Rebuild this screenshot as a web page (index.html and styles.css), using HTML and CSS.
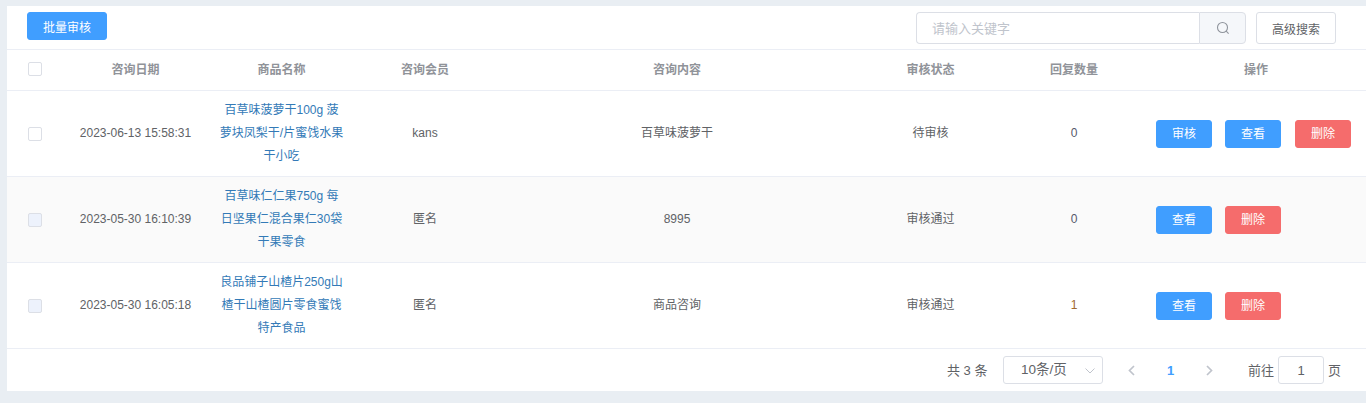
FILE: index.html
```html
<!DOCTYPE html>
<html lang="zh">
<head>
<meta charset="utf-8">
<title>咨询管理</title>
<link rel="stylesheet" href="styles.css">
</head>
<body>
<main class="panel">
  <div class="toolbar">
    <button class="btn btn-primary btn-batch">批量审核</button>
    <div class="search">
      <div class="search-group">
        <input class="search-input" placeholder="请输入关键字">
        <span class="search-btn">
          <svg width="14" height="14" viewBox="0 0 14 14" fill="none" stroke="#8f949c" stroke-width="1.1"><circle cx="6.500" cy="6.500" r="5"/><path d="M10.200 10.200 12.600 12.600"/></svg>
        </span>
      </div>
      <button class="btn btn-plain">高级搜索</button>
    </div>
  </div>
  <table class="grid">
    <colgroup>
      <col class="c-check"><col class="c-date"><col class="c-name"><col class="c-member"><col class="c-content"><col class="c-status"><col class="c-count"><col>
    </colgroup>
    <thead>
      <tr>
        <th><span class="check"></span></th>
        <th>咨询日期</th><th>商品名称</th><th>咨询会员</th><th>咨询内容</th><th>审核状态</th><th>回复数量</th><th>操作</th>
      </tr>
    </thead>
    <tbody>
      <tr>
        <td><span class="check"></span></td>
        <td>2023-06-13 15:58:31</td>
        <td><a class="link">百草味菠萝干100g 菠萝块凤梨干/片蜜饯水果干小吃</a></td>
        <td>kans</td><td>百草味菠萝干</td><td>待审核</td><td><span class="num">0</span></td>
        <td class="ops"><button class="btn btn-primary btn-op">审核</button><button class="btn btn-primary btn-op">查看</button><button class="btn btn-danger btn-op">删除</button></td>
      </tr>
      <tr class="striped">
        <td><span class="check check-off"></span></td>
        <td>2023-05-30 16:10:39</td>
        <td><a class="link">百草味仁仁果750g 每日坚果仁混合果仁30袋干果零食</a></td>
        <td>匿名</td><td>8995</td><td>审核通过</td><td><span class="num">0</span></td>
        <td class="ops"><button class="btn btn-primary btn-op">查看</button><button class="btn btn-danger btn-op">删除</button></td>
      </tr>
      <tr>
        <td><span class="check check-off"></span></td>
        <td>2023-05-30 16:05:18</td>
        <td><a class="link">良品铺子山楂片250g山楂干山楂圆片零食蜜饯特产食品</a></td>
        <td>匿名</td><td>商品咨询</td><td>审核通过</td><td><span class="num num-on">1</span></td>
        <td class="ops"><button class="btn btn-primary btn-op">查看</button><button class="btn btn-danger btn-op">删除</button></td>
      </tr>
    </tbody>
  </table>
  <div class="pager">
    <span class="total">共 3 条</span>
    <span class="size">10条/页
      <svg class="size-arrow" width="10" height="6" viewBox="0 0 10 6" fill="none" stroke="#c0c4cc" stroke-width="1"><path d="M.5.5 5 5 9.500.5"/></svg>
    </span>
    <svg class="prev" width="7" height="11" viewBox="0 0 7 11" fill="none" stroke="#c0c4cc" stroke-width="1.700"><path d="M6 1 1.500 5.500 6 10"/></svg>
    <span class="page">1</span>
    <svg class="next" width="7" height="11" viewBox="0 0 7 11" fill="none" stroke="#c0c4cc" stroke-width="1.700"><path d="M1 1 5.500 5.500 1 10"/></svg>
    <span class="goto">前往</span>
    <span class="goto-input">1</span>
    <span class="goto-unit">页</span>
  </div>
</main>
</body>
</html>
```

FILE: styles.css
```css
* { box-sizing: border-box; }
html, body { margin: 0; height: 403px; overflow: hidden; }
body {
  background: #e9eef3;
  padding: 6px 0 12px 7px;
  font-family: "Liberation Sans", "Noto Sans CJK SC", sans-serif;
  font-size: 12px;
  color: #606266;
}
.panel { background: #fff; height: 385px; }

.toolbar {
  height: 44px;
  display: flex;
  justify-content: space-between;
  align-items: flex-start;
  padding: 6px 30px 0 20px;
  border-bottom: 1px solid #ebeef5;
}
.btn {
  font: inherit;
  border-radius: 3px;
  border: 1px solid transparent;
  padding: 0;
  text-align: center;
  cursor: pointer;
}
.btn-primary { background: #409eff; border-color: #409eff; color: #fff; }
.btn-danger { background: #f56c6c; border-color: #f56c6c; color: #fff; }
.btn-plain { background: #fff; border-color: #dcdfe6; color: #606266; width: 80px; height: 32px; }
.btn-batch { width: 80px; height: 28px; }
.btn-op { width: 56px; height: 28px; padding-top: 2px; margin-right: 13px; }
.btn-op + .btn-op + .btn-op { margin-left: 1px; }
.btn-op:last-child { margin-right: 0; }

.search { display: flex; gap: 10px; }
.search-group { display: flex; width: 330px; height: 32px; }
.search-input {
  flex: 1;
  min-width: 0;
  height: 32px;
  border: 1px solid #dcdfe6;
  border-right: 0;
  border-radius: 4px 0 0 4px;
  padding: 0 15px;
  font: 13px "Liberation Sans", "Noto Sans CJK SC", sans-serif;
  outline: none;
}
.search-input::placeholder { color: #c0c4cc; }
.search-btn {
  width: 47px;
  background: #f5f7fa;
  border: 1px solid #dcdfe6;
  border-radius: 0 4px 4px 0;
  display: flex;
  align-items: center;
  justify-content: center;
}

.grid { width: 100%; table-layout: fixed; border-collapse: separate; border-spacing: 0; }
.c-check { width: 56px; }
.c-date { width: 145px; }
.c-name { width: 147px; }
.c-member { width: 140px; }
.c-content { width: 364px; }
.c-status { width: 143px; }
.c-count { width: 144px; }
.grid th, .grid td {
  padding: 0;
  text-align: center;
  vertical-align: middle;
  border-bottom: 1px solid #ebeef5;
}
.grid th { height: 41px; padding-bottom: 3px; color: #909399; font-weight: 700; }
.grid td { height: 86px; line-height: 23px; }
.striped td { background: #fafafa; }
.grid .ops { text-align: left; padding-left: 10px; }
.link { display: block; width: 125px; margin: 0 auto; color: #337ab7; }
.check {
  display: inline-block;
  width: 14px;
  height: 14px;
  vertical-align: middle;
  background: #fff;
  border: 1px solid #dcdfe6;
  border-radius: 2px;
}
.check-off { background: #edf2fc; }
.num { color: #55586a; }
.num-on { color: #a0692f; }

.pager {
  height: 42px;
  display: flex;
  align-items: center;
  padding-left: 940px;
  font-size: 13px;
}
.total { width: 56px; padding-bottom: 2px; }
.size {
  width: 100px;
  height: 28px;
  border: 1px solid #dcdfe6;
  border-radius: 3px;
  padding-left: 17px;
  line-height: 26px;
  font-size: 13.500px;
  position: relative;
}
.size-arrow { position: absolute; right: 7px; top: 11px; }
.prev { margin-left: 25px; }
.page { width: 13px; margin-left: 29px; font-weight: 700; color: #409eff; text-align: center; }
.next { margin-left: 29px; }
.goto { margin-left: 35px; width: 30px; padding-bottom: 1px; }
.goto-input {
  width: 46px;
  height: 28px;
  border: 1px solid #dcdfe6;
  border-radius: 3px;
  text-align: center;
  line-height: 28px;
}
.goto-unit { margin-left: 4px; padding-bottom: 1px; }
```
